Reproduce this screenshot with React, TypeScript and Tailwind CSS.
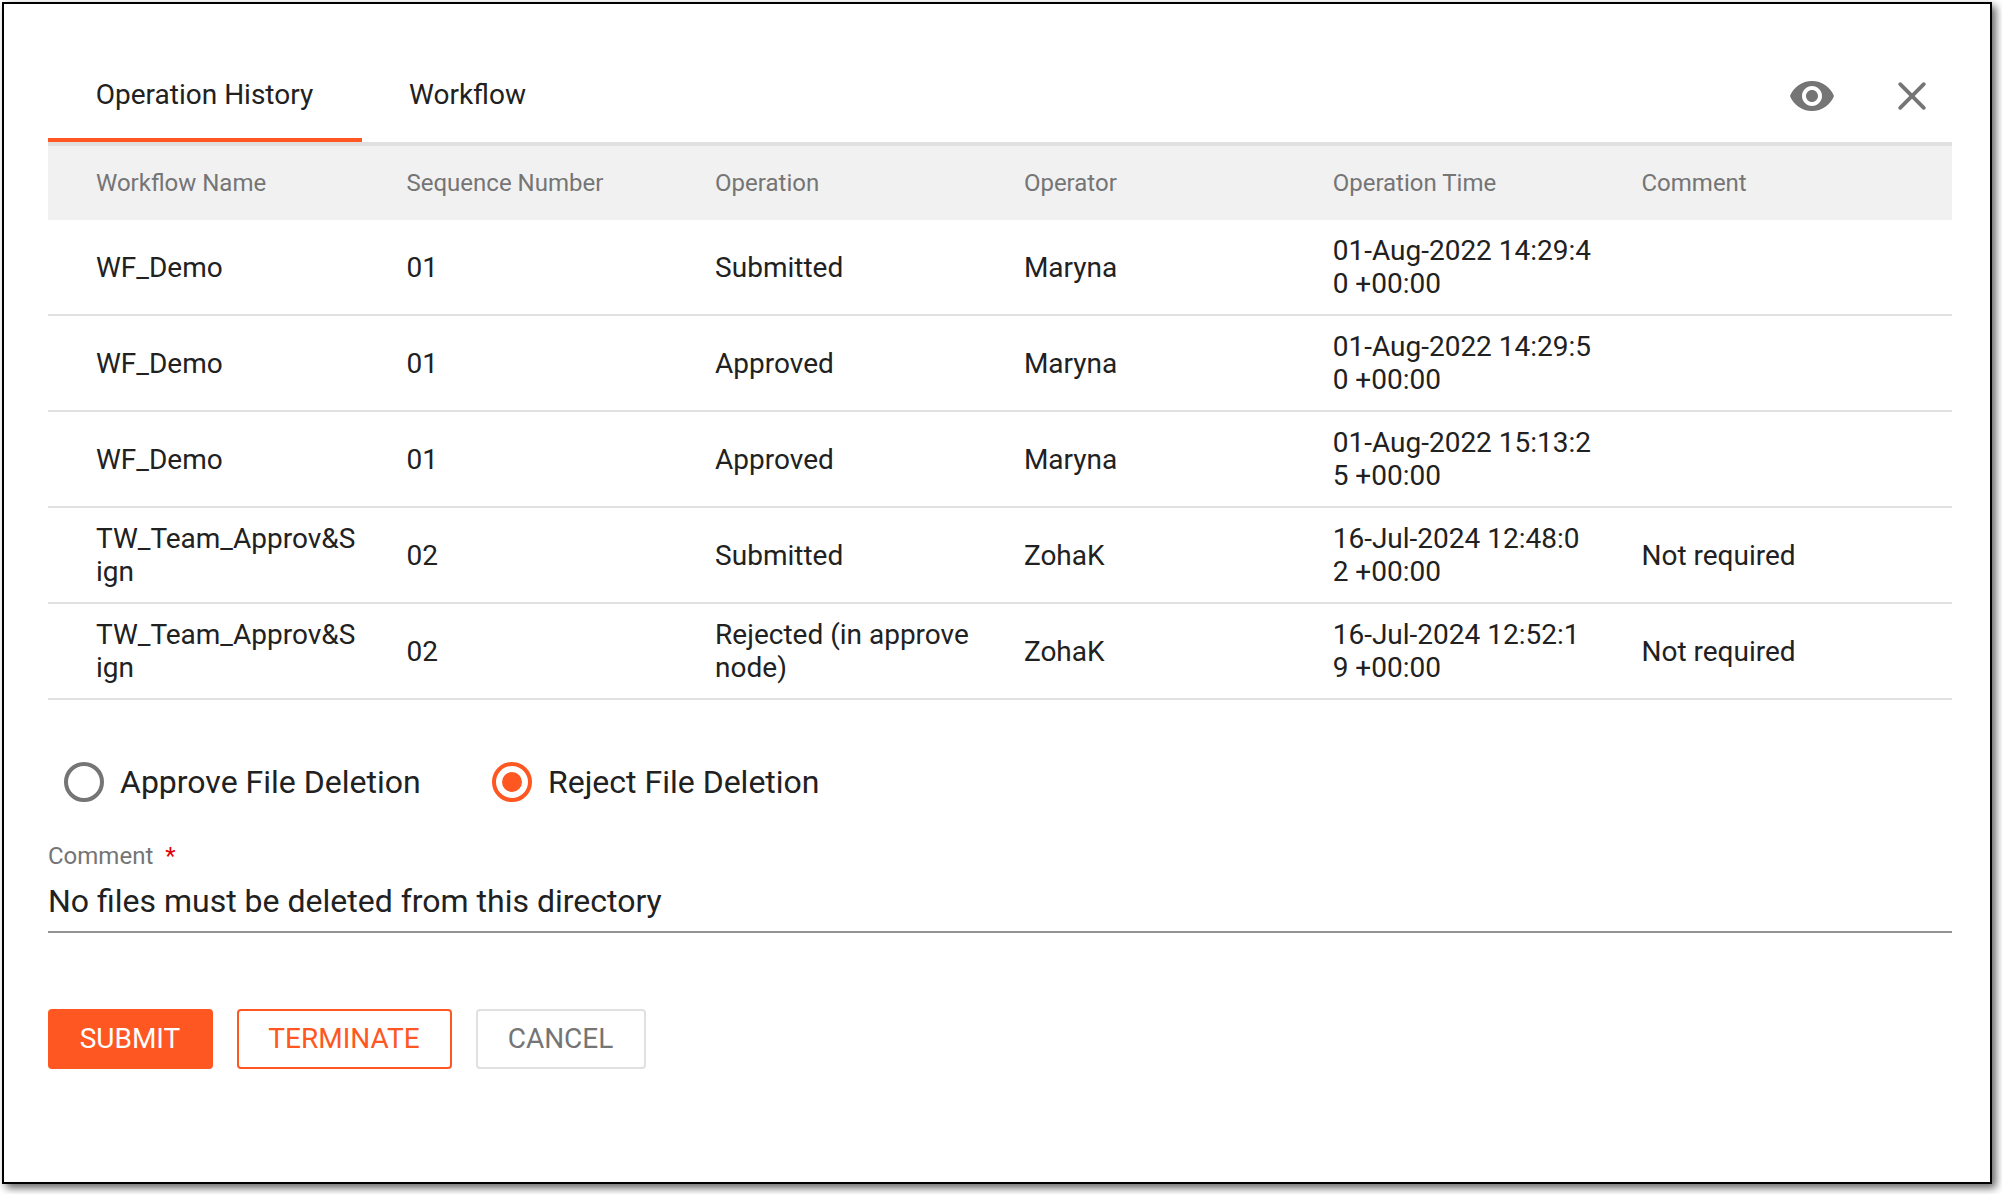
import React from 'react';

const columns = ['Workflow Name', 'Sequence Number', 'Operation', 'Operator', 'Operation Time', 'Comment'];

const rows = [
  ['WF_Demo', '01', 'Submitted', 'Maryna', '01-Aug-2022 14:29:40 +00:00', ''],
  ['WF_Demo', '01', 'Approved', 'Maryna', '01-Aug-2022 14:29:50 +00:00', ''],
  ['WF_Demo', '01', 'Approved', 'Maryna', '01-Aug-2022 15:13:25 +00:00', ''],
  ['TW_Team_Approv&Sign', '02', 'Submitted', 'ZohaK', '16-Jul-2024 12:48:02 +00:00', 'Not required'],
  ['TW_Team_Approv&Sign', '02', 'Rejected (in approve node)', 'ZohaK', '16-Jul-2024 12:52:19 +00:00', 'Not required'],
];

// date strings break in the middle of a number, everything else wraps normally
const breakAt = (value: string) => {
  const match = value.match(/^(\d\d-\w+-\d+ \d\d:\d\d:\d)(\d .*)$/);
  return match ? <>{match[1]}<br />{match[2]}</> : value;
};

const App: React.FC = () => {
  return (
    <div className="w-[2002px] h-[1194px] overflow-hidden bg-white p-0.5 font-['Roboto',sans-serif] text-[#212121]">
      <div className="w-[1990px] h-[1182px] border-2 border-black bg-white px-11 pt-11 pr-[38px] shadow-[4px_4px_8px_rgba(0,0,0,0.6)]">
        <div className="flex h-[98px] justify-between border-b-4 border-[#e0e0e0]">
          <div className="flex text-[28px] leading-[33px]">
            <button className="h-[94px] w-[314px] border-b-4 border-[#ff5722] pt-0.5 pr-px">Operation History</button>
            <button className="h-[94px] w-[212px] pb-0.5 pr-px">Workflow</button>
          </div>
          <div className="flex items-center gap-[52px] pt-0.5 pr-4">
            <svg className="size-12" viewBox="0 0 24 24" fill="#757575">
              <path d="M12 4.5C7 4.5 2.73 7.61 1 12c1.73 4.39 6 7.5 11 7.5s9.27-3.11 11-7.5c-1.73-4.39-6-7.5-11-7.5zM12 17c-2.76 0-5-2.24-5-5s2.24-5 5-5 5 2.24 5 5-2.24 5-5 5zm0-8c-1.66 0-3 1.34-3 3s1.34 3 3 3 3-1.34 3-3-1.34-3-3-3z" />
            </svg>
            <svg className="size-12" viewBox="0 0 48 48" fill="none" stroke="#757575" strokeWidth="3.8" strokeLinecap="round">
              <path d="M12.2 12.2l23.6 23.6M35.8 12.2L12.2 35.8" />
            </svg>
          </div>
        </div>

        <div className="grid h-[74px] grid-cols-[310.5px_308.6px_308.8px_308.8px_308.8px_1fr] items-center bg-[#f1f1f1] pl-12 text-2xl text-[#757575]">
          {columns.map((name) => (
            <div key={name}>{name}</div>
          ))}
        </div>
        {rows.map((row, i) => (
          <div key={i} className="grid h-24 grid-cols-[310.5px_308.6px_308.8px_308.8px_308.8px_1fr] items-center border-b-2 border-[#e0e0e0] pl-12 text-[28px] leading-[33px]">
            {row.map((cell, j) => (
              <div key={j} className="pr-12 wrap-anywhere">{breakAt(cell)}</div>
            ))}
          </div>
        ))}

        <div className="mt-[62px] flex h-10 items-center pl-4 text-[32px]">
          <label className="flex w-[428px] items-center gap-4">
            <span className="size-10 rounded-full border-4 border-[#757575]" />
            Approve File Deletion
          </label>
          <label className="flex items-center gap-4">
            <span className="flex size-10 items-center justify-center rounded-full border-4 border-[#ff5722]">
              <span className="size-5 rounded-full bg-[#ff5722]" />
            </span>
            Reject File Deletion
          </label>
        </div>

        <div className="mt-[38px] border-b-2 border-[#949494]">
          <div className="h-8 text-2xl leading-8 text-[#757575]">
            Comment <span className="ml-1.5 text-[#e30000]">*</span>
          </div>
          <div className="h-[59px] pt-[9px] text-[32px] leading-[40px]">No files must be deleted from this directory</div>
        </div>

        <div className="mt-[76px] flex gap-6 text-[28px]">
          <button className="h-[60px] w-[165px] rounded bg-[#ff5722] pr-px text-white">SUBMIT</button>
          <button className="h-[60px] w-[215px] rounded border-2 border-[#ff5722] pr-px text-[#ff5722]">TERMINATE</button>
          <button className="h-[60px] w-[170px] rounded border-2 border-[#e0e0e0] pr-px text-[#757575]">CANCEL</button>
        </div>
      </div>
    </div>
  );
};

export default App;
